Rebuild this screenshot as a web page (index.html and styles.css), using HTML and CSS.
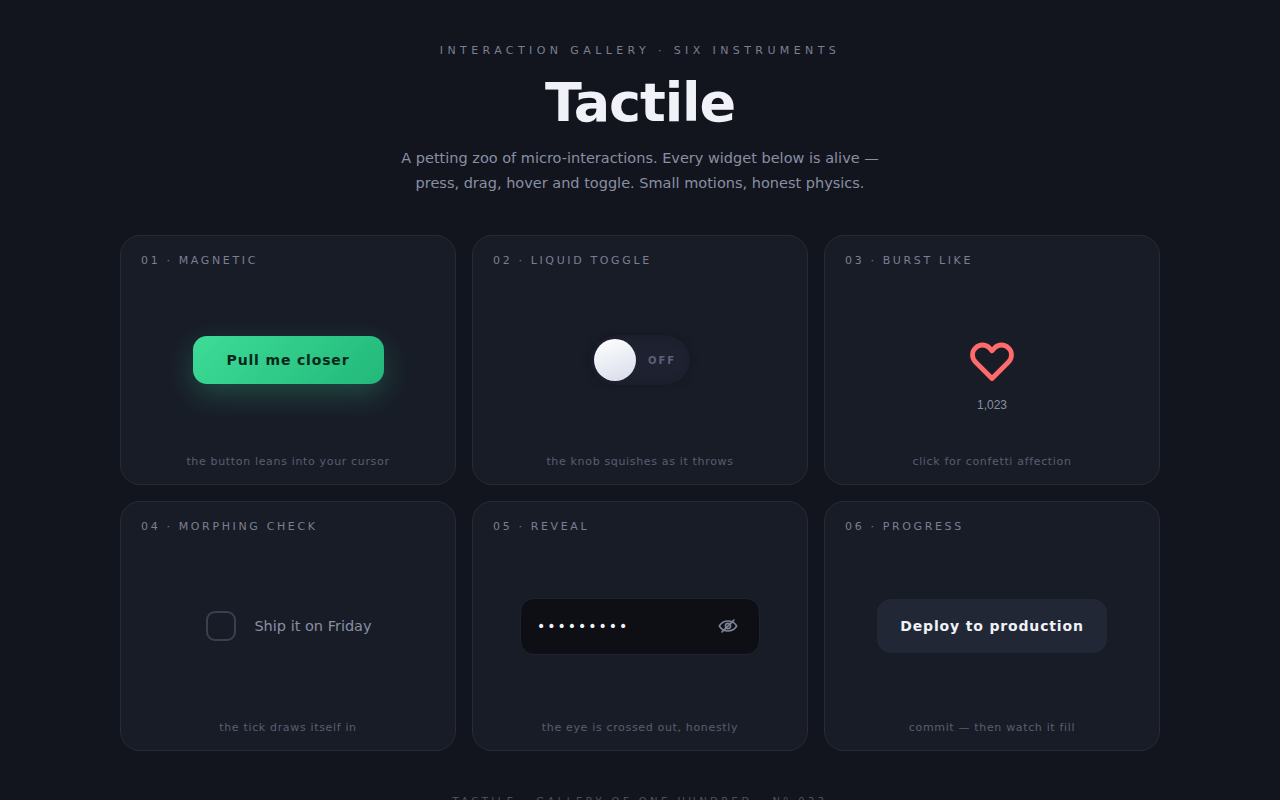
FILE: index.html
```html
<!DOCTYPE html>
<html lang="en">
<head>
  <meta charset="UTF-8" />
  <title>Tactile</title>
  <link rel="stylesheet" href="styles.css">
</head>
<body>
  <div class="page">
    <div class="header">
      <div class="eyebrow">INTERACTION GALLERY · SIX INSTRUMENTS</div>
      <h1>Tactile</h1>
      <p class="lead">A petting zoo of micro-interactions. Every widget below is alive —<br>press, drag, hover and toggle. Small motions, honest physics.</p>
    </div>

    <div class="grid">
      <div class="card">
        <div class="label">01 · MAGNETIC</div>
        <div class="stage"><button class="magnet-btn">Pull me closer</button></div>
        <div class="hint">the button leans into your cursor</div>
      </div>

      <div class="card">
        <div class="label">02 · LIQUID TOGGLE</div>
        <div class="stage">
          <div class="toggle">
            <div class="knob"></div>
            <span class="toggle-text">OFF</span>
          </div>
        </div>
        <div class="hint">the knob squishes as it throws</div>
      </div>

      <div class="card">
        <div class="label">03 · BURST LIKE</div>
        <div class="stage stage-col">
          <svg class="heart" width="44" height="40" viewBox="0 0 44 40" fill="none" stroke="#ff6b6b" stroke-width="4.8" stroke-linejoin="round">
            <path d="M22 36.5 L5.5 20 C1.5 16 1.5 9.5 5.5 6 C9.5 2 15.5 2 19.5 6 L22 8.8 L24.5 6 C28.5 2 34.5 2 38.5 6 C42.5 9.5 42.5 16 38.5 20 Z" />
          </svg>
          <div class="count">1,023</div>
        </div>
        <div class="hint">click for confetti affection</div>
      </div>

      <div class="card">
        <div class="label">04 · MORPHING CHECK</div>
        <div class="stage">
          <div class="check-row">
            <div class="checkbox"></div>
            <span class="check-text">Ship it on Friday</span>
          </div>
        </div>
        <div class="hint">the tick draws itself in</div>
      </div>

      <div class="card">
        <div class="label">05 · REVEAL</div>
        <div class="stage">
          <div class="field">
            <span class="dots">•••••••••</span>
            <svg class="eye" width="22" height="22" viewBox="0 0 24 24" fill="none" stroke="#7d8294" stroke-width="1.8" stroke-linecap="round" stroke-linejoin="round">
              <path d="M2.5 12 C5 8 8 6.5 12 6.5 C16 6.5 19 8 21.5 12 C19 16 16 17.5 12 17.5 C8 17.5 5 16 2.5 12 Z" />
              <circle cx="12" cy="12" r="2.8" />
              <path d="M5.5 18.5 L18.5 5.5" />
            </svg>
          </div>
        </div>
        <div class="hint">the eye is crossed out, honestly</div>
      </div>

      <div class="card">
        <div class="label">06 · PROGRESS</div>
        <div class="stage"><button class="deploy-btn">Deploy to production</button></div>
        <div class="hint">commit — then watch it fill</div>
      </div>
    </div>

    <div class="footer">TACTILE · GALLERY OF ONE HUNDRED · Nº 033</div>
  </div>
</body>
</html>
```

FILE: styles.css
```css
* { box-sizing: border-box; }
html, body {
  margin: 0;
  padding: 0;
}
body {
  background: #12151e;
  color: #f0f2f8;
  font-family: "DejaVu Sans", sans-serif;
}

.page {
  width: 1040px;
  margin: 0 auto;
  padding-top: 44px;
}

.header {
  text-align: center;
  margin-bottom: 39px;
}
.eyebrow {
  font-size: 11px;
  line-height: 13px;
  letter-spacing: 0.4em;
  color: #7a7f92;
}
h1 {
  margin: 14px 0 11px;
  font-size: 54px;
  line-height: 64px;
  font-weight: 700;
  letter-spacing: -0.02em;
  color: #f0f2f8;
}
.lead {
  margin: 0;
  font-size: 14.5px;
  line-height: 25px;
  color: #8a8fa3;
}

.grid {
  display: grid;
  grid-template-columns: repeat(3, 1fr);
  grid-auto-rows: 250px;
  gap: 16px;
}
.card {
  display: flex;
  flex-direction: column;
  background: #181c27;
  border: 1px solid #272b37;
  border-radius: 20px;
  padding: 18px 20px 16px;
}
.label {
  font-size: 11px;
  line-height: 13px;
  letter-spacing: 0.24em;
  color: #7a7f92;
}
.stage {
  flex: 1;
  display: flex;
  align-items: center;
  justify-content: center;
  margin-bottom: 2px;
}
.stage-col {
  flex-direction: column;
  gap: 16px;
  padding-top: 34px;
}
.hint {
  font-size: 11px;
  line-height: 13px;
  letter-spacing: 0.06em;
  text-align: center;
  color: #5a5e70;
}

.magnet-btn {
  width: 191px;
  height: 48px;
  border: none;
  border-radius: 14px;
  background: linear-gradient(135deg, #3ddc97, #22b87a);
  box-shadow: 0 10px 30px rgba(61, 220, 151, 0.25);
  color: #06281a;
  font-family: inherit;
  font-size: 14px;
  font-weight: 700;
  letter-spacing: 0.06em;
}

.toggle {
  display: flex;
  align-items: center;
  width: 100px;
  height: 50px;
  padding: 4px;
  border-radius: 25px;
  background: #1e2230;
  box-shadow: inset 3px 0 10px rgba(0, 0, 0, 0.25), 0 0 10px rgba(0, 0, 0, 0.2);
}
.knob {
  width: 42px;
  height: 42px;
  border-radius: 50%;
  background: linear-gradient(160deg, #ffffff, #d8dcea);
}
.toggle-text {
  margin-left: 12px;
  font-size: 10px;
  font-weight: 700;
  letter-spacing: 0.2em;
  color: #5c6178;
}

.heart {
  display: block;
}
.count {
  font-family: "Liberation Sans", sans-serif;
  font-size: 12px;
  line-height: 14px;
  color: #8a8fa3;
}

.check-row {
  display: flex;
  align-items: center;
  gap: 18px;
  margin-left: 2px;
}
.checkbox {
  width: 30px;
  height: 30px;
  border: 2.5px solid #3a3f52;
  border-radius: 9px;
}
.check-text {
  font-size: 14.5px;
  color: #8a8fa3;
}

.field {
  display: flex;
  align-items: center;
  justify-content: space-between;
  width: 240px;
  height: 57px;
  padding: 0 20px 0 16px;
  background: #0d0f15;
  border: 1px solid #1e2230;
  border-radius: 14px;
}
.dots {
  font-size: 14px;
  letter-spacing: 2px;
  color: #f0f2f8;
}

.deploy-btn {
  width: 230px;
  height: 54px;
  border: none;
  border-radius: 14px;
  background: #222736;
  color: #f0f2f8;
  font-family: inherit;
  font-size: 14px;
  font-weight: 700;
  letter-spacing: 0.06em;
}

.footer {
  margin-top: 45px;
  padding-bottom: 40px;
  text-align: center;
  font-size: 10px;
  line-height: 12px;
  letter-spacing: 3.45px;
  color: #4d5263;
}
```
